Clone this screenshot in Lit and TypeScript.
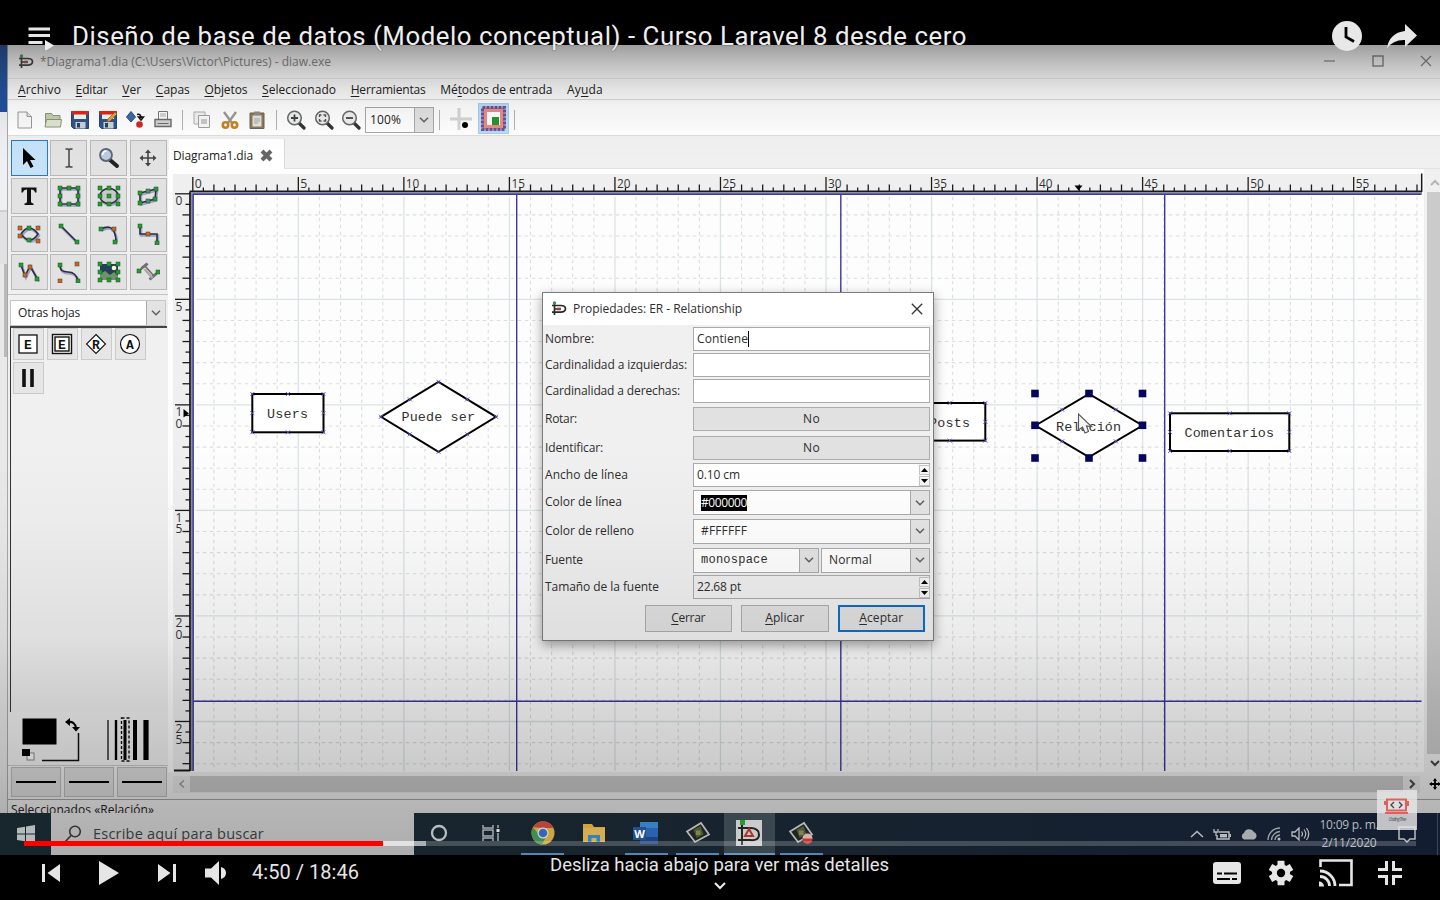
import { LitElement, html, svg, css, nothing } from "lit";
import { customElement } from "lit/decorators.js";

const UI = '"Open Sans"';
const pen = document.createElement("canvas").getContext("2d")!;

/* Letter spacing that makes a run of text take up the given width. */
function spacing(text: string, width: number, font: string): string {
  pen.font = font;
  return ((width - pen.measureText(text).width) / text.length).toFixed(3) + "px";
}

/* A label of a set width, with an optional underlined access key. */
function label(text: string, width: number, key = -1, size = 12, family = UI, cls = "") {
  const ls = spacing(text, width, `${size}px ${family}`);
  const body = key < 0 ? text : html`${text.slice(0, key)}<u>${text[key]}</u>${text.slice(key + 1)}`;
  return html`<span class="label ${cls}" style="letter-spacing:${ls};font-size:${size}px">${body}</span>`;
}

const icon = (w: number, h: number, content: unknown, cls = "") =>
  html`<svg class="icon ${cls}" width=${w} height=${h} viewBox="0 0 ${w} ${h}">${content}</svg>`;

const diaLogo = icon(16, 15, svg`
  <path d="M3.500 1v13M1 4.500h8.500q5 0 5 3.300t-5 3.300H1M3 8h7" fill="none" stroke="#2a2a2a" stroke-width="1.700"/>
  <path d="M6 6.500h4v3H6z" fill="#a43c32" opacity=".6"/><circle cx="3.500" cy="2" r="1.700" fill="#38915a"/>`);

const chevron = icon(10, 6, svg`<path d="M1 .8l4 4 4-4" fill="none" stroke="#606060" stroke-width="1.500"/>`);

/* ---------- toolbar ---------- */
const floppy = svg`
  <path d="M1.500 1.500h17v17h-15l-2-2z" fill="#2f5587" stroke="#27466e"/>
  <path d="M4 2h12v7H4z" fill="#f4f4f4"/><path d="M1.500 1h17v3.500h-17z" fill="#d92a1c"/>
  <path d="M5.500 12h10v6.500h-10z" fill="#c9d2dc"/><path d="M7 13h3v4.500H7z" fill="#2b4263"/>`;
const lens = (inner: unknown) => svg`
  <path d="M13 13l5 5" stroke="#333" stroke-width="3.200" stroke-linecap="round"/>
  <circle cx="8.500" cy="8" r="6.800" fill="#eef1f0" stroke="#686868" stroke-width="1.500"/>${inner}`;
const tools: Record<string, unknown> = {
  nuevo: svg`<path d="M3 2h9l4.500 4.500V18H3z" fill="#fbfbfb" stroke="#9a9a9a"/><path d="M12 2v4.500h4.500" fill="#e3e3e3" stroke="#9a9a9a"/>`,
  abrir: svg`<path d="M2.500 16V3.500h6l1.500 2h7V10" fill="#c4cfae" stroke="#8a957a"/><path d="M2 17l1.500-7.500h15L17.500 17z" fill="#dfe6cf" stroke="#8a957a"/>`,
  guardar: floppy,
  como: svg`${floppy}<path d="M9 12l1-3 7-7 2 2-7 7z" fill="#e9a13a" stroke="#9c5b16" stroke-width=".7"/>`,
  exportar: svg`<path d="M6 1.500l4.500 5.500L6 12 1.500 7z" fill="#3f6cab" stroke="#284a7c"/>
    <path d="M12 4.500q4-1 4 3.500M13.500 7l2.500 3 2.500-3z" fill="none" stroke="#111" stroke-width="1.500"/><circle cx="14.500" cy="14.500" r="3.300" fill="#d6281f"/>`,
  imprimir: svg`<path d="M5.500 9V1.500h9V9" fill="#fff" stroke="#777"/><path d="M7 4h6M7 6h6" stroke="#aaa"/>
    <path d="M2 9.500h16v7H2z" fill="#d4d4d4" stroke="#6c6c6c" stroke-width="1.400"/><path d="M4.500 13.500h11" stroke="#6c6c6c"/>`,
  copiar: svg`<path d="M2 2h11v12H2z" fill="#f3f3f3" stroke="#b0b0b0"/><path d="M6.500 5.500h11v12h-11z" fill="#fafafa" stroke="#a0a0a0"/><path d="M9 9h6v5H9z" fill="#c9c9c9"/>`,
  cortar: svg`<path d="M4 2l8 11M16 2L8 13" stroke="#9a9a9a" stroke-width="2.400"/><circle cx="5.500" cy="15" r="2.700" fill="none" stroke="#ca8420" stroke-width="2.600"/><circle cx="14.500" cy="15" r="2.700" fill="none" stroke="#ca8420" stroke-width="2.600"/>`,
  pegar: svg`<path d="M3 3h14v15.500H3z" fill="#8f7b5c" stroke="#6d6252"/><path d="M5.500 5.500h9v11h-9z" fill="#e4e4e0"/><path d="M7 1.500h6v3.500H7z" fill="#8c8c88"/><path d="M7 9h6M7 11h6M7 13h4" stroke="#a5a5a5"/>`,
  acercar: lens(svg`<path d="M5 8h7M8.500 4.500v7" stroke="#444" stroke-width="1.800"/>`),
  ajustar: lens(svg`<path d="M5.500 7V5h2M9.500 5h2v2M11.500 9v2h-2M7.500 11h-2V9" fill="none" stroke="#555" stroke-width="1.400"/>`),
  alejar: lens(svg`<path d="M5 8h7" stroke="#444" stroke-width="1.800"/>`),
};
const tool = (n: string) => html`<span class="tool">${icon(20, 20, tools[n])}</span>`;

/* ---------- toolbox ---------- */
const G = (pts: number[][], fill = "#1fa02c") =>
  pts.map(([x, y]) => svg`<rect x=${x - 2} y=${y - 2} width="4" height="4" fill=${fill} stroke="#274a2c" stroke-width=".5"/>`);
const O = (pts: number[][]) => G(pts, "#d9601e");
const eight = [[3, 3], [12, 3], [21, 3], [3, 11], [21, 11], [3, 19], [12, 19], [21, 19]];
const line = (d: string, fill = "none") => svg`
  <path d=${d} fill="none" stroke="#6f78bd" stroke-width="2.500" opacity=".6" transform="translate(1 1.500)"/>
  <path d=${d} fill=${fill} stroke="#2d2f3c" stroke-width="1.600"/>`;
const box: unknown[] = [
  svg`<path d="M6 1v17l4-4 3.500 7 3-1.500-3.500-6.500h5.500z" fill="#000"/>`,
  svg`<path d="M8.500 2h2.500l1 1 1-1h2.500M8.500 20h2.500l1-1 1 1h2.500M12 3v16" fill="none" stroke="#444" stroke-width="1.500"/>`,
  svg`<path d="M13 13l7 6" stroke="#222" stroke-width="4" stroke-linecap="round"/><circle cx="9" cy="8" r="6" fill="#b9c9df" stroke="#5b6674" stroke-width="1.800"/><path d="M5.500 8q.5-4 4-4" stroke="#fff" fill="none" stroke-width="1.500"/>`,
  svg`<path d="M12 4v14M5 11h14" stroke="#444" stroke-width="1.600"/><path d="M12 2.500l3 3.500H9zM12 19.500l3-3.500H9zM3.500 11L7 8v6zM20.500 11L17 8v6z" fill="#444"/>`,
  svg`<path d="M4.500 2.500h15v5h-1.500q-.5-3-4-3v12q0 2 2.500 2v1.500h-9V18.500q2.500 0 2.500-2v-12q-3.500 0-4 3H4.500z" fill="#111"/>`,
  svg`${line("M3 3h18v16H3z")}${G(eight)}`,
  svg`${line("M3 11a9 7.500 0 1 0 18 0a9 7.500 0 1 0-18 0", "#c3cdc6")}${G(eight)}${G([[12, 11]])}`,
  svg`${line("M4 8L20 4 19 14 4 18z")}${G([[4, 8], [20, 4], [19, 14], [4, 18]])}${G([[12, 6], [12, 16]], "#5a8a63")}`,
  svg`${line("M4 11q8-12 17 0q-8 12-17 0")}${O([[3, 5], [3, 13], [21, 5], [21, 18]])}${G([[12, 5], [12, 17]])}`,
  svg`${line("M4 3l16 16")}${G([[4, 3], [20, 19]])}`,
  svg`${line("M4 6q14-7 15 12")}${G([[4, 6], [18, 19]])}${O([[17, 6]])}`,
  svg`${line("M4 3v8h17v9")}${G([[4, 3], [21, 20]])}${O([[12, 11]])}`,
  svg`${line("M4 4l4 11 5-10 8 14")}${G([[4, 4], [20, 18]])}${O([[8, 14], [13, 6]])}`,
  svg`${line("M3 5q0 6 8 6t10 9")}${G([[3, 4], [21, 20]])}${O([[20, 3], [3, 20]])}`,
  svg`<path d="M3 3h18v16H3z" fill="#233f5c"/><path d="M3 13l5-3 5 4 4-3 4 4v4H3z" fill="#6f9468"/><circle cx="17" cy="7" r="2.300" fill="#fff7c2"/>${G(eight)}`,
  svg`<path d="M5 7l6-5M9 5l9 10M13 18l7-6M4 9l8-6M14 19l7-6" fill="none" stroke="#6e6e6e" stroke-width="1.600"/><path d="M8.500 8l8 9" stroke="#aaa" stroke-width="2.500"/>${G([[3, 10], [22, 11]])}`,
];
const shapes: unknown[] = [
  svg`<rect x="3" y="3" width="18" height="18" fill="#fff" stroke="#111" stroke-width="1.300"/><text class="glyph" x="12" y="17">E</text>`,
  svg`<rect x="2.500" y="2.500" width="19" height="19" fill="#fff" stroke="#111" stroke-width="1.400"/><rect x="5" y="5" width="14" height="14" fill="#fff" stroke="#111" stroke-width="1.400"/><text class="glyph" x="12" y="16.500">E</text>`,
  svg`<path d="M12 2.500l9.500 9.500-9.500 9.500L2.500 12z" fill="#fff" stroke="#111" stroke-width="1.100"/><text class="glyph" x="12" y="16.500">R</text>`,
  svg`<circle cx="12" cy="12" r="9.500" fill="#fff" stroke="#111" stroke-width="1.200"/><text class="glyph" x="12" y="16.500">A</text>`,
  svg`<path d="M8 3v18M16 3v18" stroke="#111" stroke-width="3.600"/>`,
];

/* ---------- canvas ---------- */
const X0 = 192.8, Y0 = 193.8, U = 21.107;
const R = 1421.5, B = 771;

function grid() {
  const out: unknown[] = [];
  for (let i = 1; X0 + i * U < R; i++) {
    const x = X0 + i * U;
    out.push(svg`<line x1=${x} x2=${x} y1=${Y0 + 3} y2=${B} class=${i % 5 ? "minor" : "major"}/>`);
  }
  for (let i = 1; Y0 + i * U < B; i++) {
    const y = Y0 + i * U;
    out.push(svg`<line x1=${X0 + 3} x2=${R} y1=${y} y2=${y} class=${i % 5 ? "minor" : "major"}/>`);
  }
  return out;
}

function rulers() {
  const out: unknown[] = [];
  for (let i = 0; X0 + (i * U) / 2 < R - 4; i++) {
    const x = X0 + (i * U) / 2;
    const top = i % 10 === 0 ? 177 : i % 2 === 0 ? 184.5 : 187.5;
    out.push(svg`<line x1=${x} x2=${x} y1=${top} y2="191.500" class="tick"/>`);
    if (i % 10 === 0) out.push(svg`<text class="num" x=${x + 2} y="188" textLength=${i > 10 ? 13.5 : 7} lengthAdjust="spacingAndGlyphs">${i / 2}</text>`);
  }
  for (let i = 0; Y0 + (i * U) / 2 < B; i++) {
    const y = Y0 + (i * U) / 2;
    const left = i % 10 === 0 ? 175 : i % 2 === 0 ? 182.5 : 185.5;
    out.push(svg`<line y1=${y} y2=${y} x1=${left} x2="190" class="tick"/>`);
    if (i % 10 === 0) String(i / 2).split("").forEach((c, k) =>
      out.push(svg`<text class="num" x="175.500" y=${y + 11.500 + k * 11.500}>${c}</text>`));
  }
  return out;
}

const marks = (pts: number[][]) =>
  pts.map(([x, y]) => svg`<path class="mark" d="M${x - 2} ${y - 2}l4 4m0-4l-4 4"/>`);

function entity(x: number, y: number, w: number, h: number, name: string, tx: number, tw: number, ty: number) {
  return svg`<rect class="shape" x=${x} y=${y} width=${w} height=${h}/>
    ${marks([[x, y], [x + w / 2, y], [x + w, y], [x, y + h / 2], [x + w, y + h / 2], [x, y + h], [x + w / 2, y + h], [x + w, y + h]])}
    <text class="mono" x=${tx} y=${ty} textLength=${tw}>${name}</text>`;
}
function relation(cx: number, cy: number, rx: number, ry: number, name: string, tx: number, tw: number, ty: number) {
  return svg`<path class="shape" d="M${cx - rx} ${cy}L${cx} ${cy - ry}L${cx + rx} ${cy}L${cx} ${cy + ry}Z"/>
    ${marks([[cx - rx, cy], [cx + rx, cy], [cx, cy - ry], [cx, cy + ry], [cx - rx / 2, cy - ry / 2], [cx + rx / 2, cy - ry / 2], [cx - rx / 2, cy + ry / 2], [cx + rx / 2, cy + ry / 2]])}
    <text class="mono" x=${tx} y=${ty} textLength=${tw}>${name}</text>`;
}
const handles = [[1035, 393.5], [1089, 393.5], [1142.5, 393.5], [1035, 425.3], [1142.5, 425.3], [1035, 458], [1089, 458], [1142.5, 458]];

@customElement("dia-canvas")
class DiaCanvas extends LitElement {
  static styles = css`
    :host { display: block; width: 1256px; height: 603px; flex: none; }
    svg { display: block; }
    .minor { stroke: #d9dedf; stroke-width: 1.1; stroke-dasharray: 3.5 3.5; }
    .major { stroke: #dbe3e6; stroke-width: 1.3; }
    .page { stroke: #3c389c; stroke-width: 1.4; }
    .tick { stroke: #1c1c1c; stroke-width: 1.3; }
    .num { font: 12px "Open Sans", sans-serif; fill: #333; }
    .shape { fill: #fff; stroke: #000; stroke-width: 2; }
    .mark { stroke: #5a50d0; stroke-width: .9; fill: none; }
    .mono { font: 13.4px "Liberation Mono", monospace; fill: #303030; }
    .handle { fill: #05055e; }
  `;
  render() {
    return html`<svg width="1256" height="603" viewBox="168 169 1256 603">
      <rect x="168" y="169" width="1256" height="603" fill="#fdfdfd"/>
      <rect x="173" y="174" width="1249" height="18" fill="#efefef"/>
      <rect x="173" y="192" width="17" height="579" fill="#efefef"/>
      ${grid()}
      <rect x="191" y="191" width="1231" height="3" fill="#8d8da6"/>
      <path d="M189.500 191.300H1422M1421.700 173.500V192" stroke="#1a1a1a" stroke-width="1.500" fill="none"/>
      <path d="M190 192v579M174 770.500h16" stroke="#1a1a1a" stroke-width="1.800"/>
      <path d="M192 192v579" stroke="#8d8da6" stroke-width="2"/>
      ${[193.2, 516.7, 840.8, 1164.7].map(x => svg`<line class="page" x1=${x} x2=${x} y1="194" y2="771"/>`)}
      ${[194.2, 701.3].map(y => svg`<line class="page" x1="193" x2="1421.500" y1=${y} y2=${y}/>`)}
      ${rulers()}
      <path d="M1074.500 185.500h8l-4 5z" fill="#000"/><path d="M183.500 409l5.500 4.500-5.500 4z" fill="#000"/>
      ${entity(252.3, 394, 71.2, 38.3, "Users", 267, 41, 418)}
      ${relation(438.5, 416.8, 57.5, 35, "Puede ser", 401.5, 73.5, 421)}
      ${entity(914, 403, 71.3, 37.6, "Posts", 929, 41, 427)}
      ${relation(1089, 425.5, 53.5, 31.5, "Relación", 1056, 65, 431)}
      ${handles.map(([x, y]) => svg`<rect class="handle" x=${x - 3.8} y=${y - 3.8} width="7.600" height="7.600"/>`)}
      ${entity(1170, 413.3, 119.3, 37.7, "Comentarios", 1184.5, 89.5, 437)}
      <path d="M1078.500 414v16l4-3 2.500 6 3.500-1.500-2-5.500 5 .5z" fill="#f4f4f4" stroke="#555" stroke-width="1.100"/>
    </svg>`;
  }
}

/* ---------- dialog ---------- */
@customElement("dia-dialog")
class DiaDialog extends LitElement {
  static styles = css`
    :host { display: block; box-sizing: border-box; width: 392px; height: 349px; background: #f0f0f0; border: 1px solid #7c7c7c;
      box-shadow: 0 4px 11px rgba(0,0,0,.38); color: #2e2e2e; font-family: "Open Sans", sans-serif; }
    .label { white-space: pre; line-height: 16px; display: inline-block; }
    u { text-underline-offset: 1.5px; text-decoration-thickness: 1px; }
    .title { height: 32px; background: #fff; display: flex; align-items: center; padding: 0 10px 1px 8px; box-sizing: border-box; }
    .title .icon { margin-right: 6px; }
    .title .close { margin: 0 0 0 auto; }
    .form { display: grid; grid-template-columns: 148px 1fr; padding: 1.5px 3px 0 2px; grid-template-rows: 26.4px 26.6px 28px 28.2px 27.8px 27px 28.5px 28.7px 27.5px 27px; }
    .cell { height: 24px; display: flex; align-items: center; box-sizing: border-box; }
    .field { background: #fff; border: 1px solid #ababab; padding-left: 3px; }
    .btn { background: #e1e1e1; border: 1px solid #adadad; justify-content: center; }
    .grey { background: #f0f0f0; }
    .caret { width: 1px; height: 16px; background: #000; }
    .spin { margin-left: auto; width: 11px; display: grid; gap: 1px; margin-right: -1px; }
    .spin i { height: 10px; background: #f6f6f6; border: 1px solid #c4c4c4; display: flex; align-items: center; justify-content: center; box-sizing: border-box; }
    .combo { padding-left: 7px; height: 25px; }
    .drop { margin-left: auto; width: 19px; height: 23px; background: #e4e4e4; border-left: 1px solid #ababab; display: flex; align-items: center; justify-content: center; padding-right: 1px; box-sizing: border-box; }
    .sel { background: #000; color: #fff; }
    .pair { display: grid; grid-template-columns: 126px 109px; gap: 2px; }
    .mono { font-family: "Liberation Mono", monospace; }
    .foot { display: flex; gap: 9px; justify-content: flex-end; padding: 2.5px 8px 0 0; }
    .foot .cell { width: 87.5px; height: 27px; }
    .main { border: 2px solid #0b6fd0; }
  `;
  render() {
    const drop = html`<span class="drop">${chevron}</span>`;
    const spin = html`<span class="spin"><i>${icon(7, 4, svg`<path d="M0 4l3.500-4L7 4z"/>`)}</i><i>${icon(7, 4, svg`<path d="M0 0l3.500 4L7 0z"/>`)}</i></span>`;
    const row = (t: string, w: number, field: unknown) => html`<div class="cell">${label(t, w)}</div>${field}`;
    return html`
      <div class="title">${diaLogo}${label("Propiedades: ER - Relationship", 169)}
        ${icon(12, 12, svg`<path d="M.8.8l10.400 10.400M11.200.8L.8 11.200" stroke="#333" stroke-width="1.300"/>`, "close")}</div>
      <div class="form">
        ${row("Nombre:", 49, html`<div class="cell field">${label("Contiene", 51)}<i class="caret"></i></div>`)}
        ${row("Cardinalidad a izquierdas:", 142, html`<div class="cell field"></div>`)}
        ${row("Cardinalidad a derechas:", 135, html`<div class="cell field"></div>`)}
        ${row("Rotar:", 32, html`<div class="cell btn">${label("No", 17)}</div>`)}
        ${row("Identificar:", 58, html`<div class="cell btn">${label("No", 17)}</div>`)}
        ${row("Ancho de línea", 83, html`<div class="cell field">${label("0.10 cm", 43)}${spin}</div>`)}
        ${row("Color de línea", 77, html`<div class="cell field combo">${label("#000000", 46, -1, 12, UI, "sel")}${drop}</div>`)}
        ${row("Color de relleno", 89, html`<div class="cell field combo">${label("#FFFFFF", 46)}${drop}</div>`)}
        ${row("Fuente", 38, html`<div class="pair"><div class="cell field combo">${label("monospace", 67, -1, 12, '"Liberation Mono"', "mono")}${drop}</div><div class="cell field combo">${label("Normal", 43)}${drop}</div></div>`)}
        ${row("Tamaño de la fuente", 114, html`<div class="cell field grey">${label("22.68 pt", 44)}${spin}</div>`)}
      </div>
      <div class="foot">
        <div class="cell btn">${label("Cerrar", 34, 0)}</div>
        <div class="cell btn">${label("Aplicar", 39, 0)}</div>
        <div class="cell btn main">${label("Aceptar", 44, 0)}</div>
      </div>`;
  }
}

@customElement("app-root")
class AppRoot extends LitElement {
  static styles = css`
    :host { display: block; position: relative; width: 1440px; height: 900px; overflow: hidden; background: #000; color: #222; font-family: "Open Sans", sans-serif; }
    .label { white-space: pre; line-height: 16px; display: inline-block; }
    u { text-underline-offset: 1.5px; text-decoration-thickness: 1px; }
    .icon { display: block; flex: none; }
    .frame { padding-top: 45px; height: 810px; display: flex; flex-direction: column; }
    .work { height: 768px; display: flex; overflow: hidden; background: #f0f0f0; }
    .desk { width: 8px; flex: none; display: flex; flex-direction: column; border-right: 1px solid #a9a9a9; box-sizing: border-box; }
    .desk-blue { height: 67px; background: linear-gradient(#2f5ca5, #1f4fa0); }
    .desk-a { height: 98px; background: #eeeff2; }
    .desk-b { height: 52px; background: #e2e2e4; border-top: 2px solid #cfcfd2; }
    .desk-c { height: 93px; border-right: 3px solid #b9b9b9; background: #e8e8e8; }
    .desk-d { flex: 1; background: #e9e9e9; }
    .win { width: 1432px; flex: none; display: flex; flex-direction: column; box-sizing: border-box; }
    .title { height: 33px; background: #fff; display: flex; align-items: center; padding: 0 8px 0 10px; color: #8b8b8b; flex: none; box-sizing: border-box; }
    .title .icon { margin-right: 6px; opacity: .85; }
    .winbtns { margin-left: auto; display: flex; gap: 36px; align-items: center; padding-bottom: 2px; }
    .title .winbtns .icon { margin: 0; }
    .menu { height: 22px; background: #fff; border-top: 1px solid #ededed; border-bottom: 1px solid #d9d9d9; display: flex; gap: 14.6px; align-items: center; padding: 1px 0 0 10px; box-sizing: border-box; flex: none; }
    .toolbar { height: 36px; background: #fff; border-bottom: 1px solid #dedede; display: flex; align-items: center; padding: 4px 0 0 3.5px; box-sizing: border-box; flex: none; }
    .tool { width: 27.5px; display: flex; justify-content: center; }
    .sep { width: 1px; height: 20px; background: #b3b3b3; margin: 0 5.4px; }
    .zoom { width: 69px; height: 26px; box-sizing: border-box; border: 1px solid #a9a9a9; background: #fff; display: flex; align-items: center; padding-left: 4px; }
    .drop { margin-left: auto; width: 18px; align-self: stretch; background: #e3e3e3; border-left: 1px solid #ababab; display: flex; align-items: center; justify-content: center; }
    .toggle { width: 31px; height: 31px; background: #bcdcf6; display: flex; align-items: center; justify-content: center; border: 1px solid #a6cff0; box-sizing: border-box; margin-top: -2px; }
    .body { height: 661px; display: flex; flex: none; }
    .left { width: 160px; flex: none; display: flex; flex-direction: column; }
    .box { display: grid; grid-template-columns: repeat(4, 37.2px); grid-auto-rows: 36px; gap: 2px 2.6px; padding: 4px 0 3px 2.5px; border-bottom: 1px solid #c4c4c4; height: 159px; box-sizing: border-box; }
    .cell { background: #e2e2e2; border: 1px solid #b9b9b9; box-sizing: border-box; display: flex; align-items: center; justify-content: center; }
    .on { background: #c5e2f9; border-color: #2a78c4; }
    .sheet { margin: 5px 2px 0 2px; height: 26px; background: #fff; border: 1px solid #c6c6c6; box-sizing: border-box; display: flex; align-items: center; padding-left: 7px; }
    .sheets { margin: 0 1px 0 2px; height: 387px; box-sizing: border-box; border-top: 2px solid #444; border-left: 1px solid #333; display: grid; grid-template-columns: repeat(4, 31.5px); grid-auto-rows: 32px; gap: 2px 2.5px; padding: 0 0 0 1.5px; align-content: start; }
    .sheets .cell { border-color: #cacaca; background: #e6e6e6; }
    .glyph { font: bold 13px "Liberation Mono", monospace; text-anchor: middle; fill: #111; }
    .colors { height: 54px; border-bottom: 1px solid #cbcbcb; background: #f2f2f2; padding-top: 1px; box-sizing: border-box; }
    .lines { display: flex; gap: 2.5px; padding: 1px 1px 0 3px; height: 30px; }
    .lines .cell { flex: 1; background: #dedede; border-color: #bbb; }
    .dash { width: 40px; height: 2px; background: #000; }
    .right { flex: 1; display: flex; flex-direction: column; }
    .tabs { height: 33px; display: flex; border-bottom: 1px solid #e2e2e2; box-sizing: border-box; background: #f0f0f0; }
    .tab { background: #fff; width: 116px; margin: 3px 0 -1px 1px; padding: 3px 0 0 4px; display: flex; align-items: center; gap: 7px; box-sizing: border-box; border-right: 1px solid #dadada; }
    .view { display: flex; height: 603px; }
    .vbar { width: 16px; background: #f0f0f0; display: flex; flex-direction: column; align-items: center; padding-top: 5px; box-sizing: border-box; }
    .vthumb { width: 14px; flex: 1; background: #cbcbcb; margin-left: 3px; }
    .arrow { height: 18px; display: flex; align-items: center; margin-left: 3px; }
    .hbar { height: 25px; display: flex; align-items: center; padding: 0 0 1px 5px; box-sizing: border-box; }
    .htrack { display: flex; align-items: center; width: 1247px; height: 17px; background: #e6e6e6; justify-content: space-between; margin-right: 9px; }
    .hthumb { width: 1213px; height: 16px; background: #c8c8c8; }
    .harrow { width: 17px; display: flex; justify-content: center; }
    .status { border-top: 1px solid #a2a2a2; padding: 2px 0 0 3px; height: 17px; background: #f0f0f0; flex: none; margin-top: 2px; display: flex; align-items: flex-start; box-sizing: border-box; }
    .bar { height: 42px; display: flex; background: linear-gradient(90deg, #18262d, #17242f 55%, #131d31); color: #b9bcbf; flex: none; position: relative; }
    .start { width: 51px; display: flex; align-items: center; justify-content: center; }
    .search { width: 362.5px; background: linear-gradient(#b5b5b5, #adadad); color: #35383b; display: flex; align-items: center; padding-left: 13px; gap: 11px; box-sizing: border-box; }
    .apps { display: flex; }
    .app { width: 51.7px; display: flex; align-items: center; justify-content: center; box-sizing: border-box; border-bottom: 2px solid transparent; }
    .run { width: 43px; margin: 0 4.35px; border-color: #5285b9; }
    .cur { background: #3b474f; width: 51.7px; margin: 0; border-color: #6497c8; }
    .tray { margin-left: auto; display: flex; align-items: center; gap: 9px; }
    .clock { display: flex; flex-direction: column; align-items: center; width: 60px; gap: 2px; color: #b9bcc0; }
    .edge { width: 1px; align-self: stretch; background: #3c4656; margin: 0 2px 0 12px; }
    .shade { position: absolute; left: 0; top: 45px; width: 1440px; height: 768px; pointer-events: none;
      background: linear-gradient(rgba(0,0,0,.38) 0, rgba(0,0,0,.27) 15px, rgba(0,0,0,.18) 30px, rgba(0,0,0,.1) 46px, rgba(0,0,0,.055) 60px, rgba(0,0,0,.01) 91px, transparent 115px, transparent 400px, rgba(0,0,0,.02) 480px, rgba(0,0,0,.07) 590px, rgba(0,0,0,.14) 655px, rgba(0,0,0,.2) 725px, rgba(0,0,0,.25) 768px); }
    dia-dialog { position: absolute; left: 542px; top: 292px; }
    .head { position: absolute; left: 0; top: 0; width: 1440px; height: 72px; display: flex; align-items: center; padding: 0 22px 0 27px; box-sizing: border-box; color: #eee; }
    .head .label, .controls .label { font-family: Roboto, sans-serif; line-height: 30px; text-shadow: 0 0 2px rgba(0,0,0,.6); }
    .head .label { margin-left: 17px; }
    .head .acts { margin-left: auto; display: flex; gap: 23px; align-items: center; }
    .mark { position: absolute; left: 1377px; top: 790px; width: 40px; height: 40px; background: rgba(230,230,232,.82); display: flex; flex-direction: column; align-items: center; padding-top: 8px; box-sizing: border-box; font-style: italic; color: #555; }
    .mark .label { line-height: 8px; }
    .progress { position: absolute; left: 24px; top: 841px; width: 1392px; height: 5px; background: rgba(255,255,255,.2); display: flex; }
    .played { background: #f00; }
    .loaded { background: rgba(255,255,255,.55); }
    .controls { position: absolute; left: 0; top: 855px; width: 1440px; height: 45px; display: flex; align-items: center; color: #e6e6e6; padding: 0 37px 9px 41px; box-sizing: border-box; background: #000; }
    .lft { display: flex; align-items: center; width: 509px; }
    .lft .label { margin-left: 24px; padding-bottom: 2px; }
    .gap { margin-left: 38px; }
    .gap2 { margin-left: 27px; }
    .hint { display: flex; flex-direction: column; align-items: center; align-self: flex-start; gap: 7px; }
    .hint .label { line-height: 20px; }
    .rgt { margin-left: auto; display: flex; gap: 24px; align-items: center; }
    .cc { margin-right: 2px; }
  `;

  private strip() {
    return html`<div class="desk"><div class="desk-blue"></div><div class="desk-a"></div><div class="desk-b"></div><div class="desk-c"></div><div class="desk-d"></div></div>`;
  }

  private leftPanel() {
    return html`<div class="left">
      <div class="box">${box.map((b, i) => html`<span class="cell ${i ? "" : "on"}">${icon(24, 22, b)}</span>`)}</div>
      <div class="sheet">${label("Otras hojas", 62)}<span class="drop">${chevron}</span></div>
      <div class="sheets">${shapes.map(s => html`<span class="cell">${icon(24, 24, s)}</span>`)}</div>
      <div class="colors">${icon(158, 52, svg`
        <path d="M70.500 20v27.500H34" fill="none" stroke="#111" stroke-width="1.500"/>
        <rect x="14.500" y="5.500" width="34" height="26" fill="#000"/>
        <path d="M60 9q7-1 8 6" fill="none" stroke="#000" stroke-width="2"/><path d="M57 9l5-4v8zM64 14h8l-4 4.500z" fill="#000"/>
        <rect x="19" y="40" width="7" height="7" fill="#fff" stroke="#888"/><rect x="14" y="36" width="8" height="7" fill="#000"/>
        <path d="M100 7v40" stroke="#111" stroke-width="1.300"/><path d="M108 7v40" stroke="#000" stroke-width="2.400"/>
        <path d="M117 7v40" stroke="#000" stroke-width="3"/><path d="M113.500 5h7.500v43h-7.500z" fill="none" stroke="#111" stroke-width="1.400" stroke-dasharray="3 2"/>
        <path d="M127 7v40" stroke="#000" stroke-width="4"/><path d="M138 7v40" stroke="#000" stroke-width="5.200"/>`)}</div>
      <div class="lines">${[0, 1, 2].map(() => html`<span class="cell"><i class="dash"></i></span>`)}</div>
    </div>`;
  }

  private taskbar() {
    const camtasia = (rec: boolean) => icon(26, 24, svg`
      <path d="M2 10.500L16 2l8 11.500L10 21z" fill="#1f2622" stroke="#b8b8b8" stroke-width="1.700"/><path d="M8.500 8.500l7-3.500 3 8.500-7 3.500z" fill="#4d5735"/><path d="M11 9.500h4.500v4.500H11z" fill="#7b8552"/>
      ${rec ? svg`<circle cx="19.500" cy="18" r="5" fill="#c43a33"/><path d="M14.500 17.500a5 5 0 0 1 10 0z" fill="#d8b0ac"/>` : nothing}`);
    const apps: [string, unknown][] = [
      ["", icon(18, 18, svg`<circle cx="9" cy="9" r="7" fill="none" stroke="#b8bcc0" stroke-width="2.300"/>`)],
      ["", icon(20, 18, svg`<path d="M2 1v3h10V1M2 17v-3h10v3M2 6h10v6H2zM17 1v3M17 9v8" fill="none" stroke="#a5abb0" stroke-width="1.500"/><rect x="15.500" y="5" width="3" height="3" fill="#ddd"/>`)],
      ["run", icon(24, 24, svg`<circle cx="12" cy="12" r="11.500" fill="#c9a63f"/><path d="M2 6.300A11.500 11.500 0 0 1 22.500 7H12z" fill="#b8453b"/><path d="M2 6.300A11.500 11.500 0 0 0 11 23.400L16 14l-8-.5z" fill="#3f8f52"/><circle cx="12" cy="12" r="5.500" fill="#d8d8d8"/><circle cx="12" cy="12" r="4.300" fill="#3866b8"/>`)],
      ["", icon(24, 20, svg`<path d="M1 1h9l2 3h11v15H1z" fill="#cfa243"/><path d="M1 5h22v14H1z" fill="#d5ae54"/><path d="M6 19v-7h12v7h-3.500v-4h-5v4z" fill="#3482b9"/>`)],
      ["run", icon(26, 22, svg`<path d="M7 0h18v22H7z" fill="#2b62ae"/><path d="M7 0h18v6H7z" fill="#387ec2"/><path d="M7 15h18v7H7z" fill="#1c4280"/><rect x="0" y="5" width="13" height="13" fill="#204f94"/><text x="6.500" y="15.500" text-anchor="middle" font-family="Open Sans" font-weight="700" font-size="11" fill="#fff">W</text>`)],
      ["run", camtasia(false)],
      ["run cur", icon(26, 26, svg`<rect width="26" height="26" fill="#c9cbcc"/><path d="M6 2v23M2 8h12q9 0 9 6.500T14 20H2" fill="none" stroke="#222" stroke-width="2"/><path d="M9 16l4-7 4 7z" fill="none" stroke="#b1322a" stroke-width="2"/><rect x="4" y="0" width="5" height="5" fill="#1fa02c"/>`)],
      ["run", camtasia(true)],
    ];
    return html`<div class="bar">
      <div class="start">${icon(18, 18, svg`<path d="M0 3l8-1.300V8.500H0zM9 1.500L18 0v8.500H9zM0 9.500h8v6.800L0 15zM9 9.500h9V18l-9-1.500z" fill="#b5babd"/>`)}</div>
      <div class="search">${icon(18, 18, svg`<circle cx="11" cy="6.500" r="5.300" fill="none" stroke="#333" stroke-width="1.600"/><path d="M7 10.500L1 17" stroke="#333" stroke-width="1.700"/>`)}${label("Escribe aquí para buscar", 171, -1, 14.5)}</div>
      <div class="apps">${apps.map(([c, i]) => html`<span class="app ${c}">${i}</span>`)}</div>
      <div class="tray">
        ${icon(14, 8, svg`<path d="M1 7l6-5.500L13 7" fill="none" stroke="#b9bcc0" stroke-width="1.500"/>`)}
        ${icon(18, 12, svg`<path d="M6 4h10v7H4V7" fill="none" stroke="#b9bcc0" stroke-width="1.500"/><path d="M7 6h7v3.500H7zM16.500 6h1.500v3h-1.500z" fill="#b9bcc0"/><path d="M1 1v3h4V1M3 4v4" stroke="#b9bcc0" fill="none" stroke-width="1.300"/>`)}
        ${icon(18, 12, svg`<path d="M4 11.500a3.500 3.500 0 0 1 0-6.500 5.500 5.500 0 0 1 10-1 4 4 0 0 1 0 7.500z" fill="#a7abb0"/>`)}
        ${icon(15, 14, svg`<g fill="none" stroke="#9da2a8" stroke-width="1.400"><path d="M1 13A12 12 0 0 1 13 1M4.500 13A9 9 0 0 1 13 4.500M8 13a5.500 5.500 0 0 1 5-5"/></g><circle cx="12" cy="12" r="1.500" fill="#b9bcc0"/>`)}
        ${icon(19, 14, svg`<path d="M1 5h3l4-4v12L4 9H1z" fill="none" stroke="#b9bcc0" stroke-width="1.300"/><path d="M10.500 4.500q2 2.500 0 5M13 2.500q3.500 4.500 0 9M15.500 1q4.500 6 0 12" fill="none" stroke="#b9bcc0" stroke-width="1.200"/>`)}
        <div class="clock">${label("10:09 p. m.", 59)}${label("2/11/2020", 55)}</div>
        ${icon(28, 20, svg`<path d="M11 3h16v12h-5l-3 3-3-3h-5z" fill="none" stroke="#b9bcc0" stroke-width="1.500"/>`)}
        <i class="edge"></i>
      </div>
    </div>`;
  }

  render() {
    const menus: [string, number, number][] = [["Archivo", 43, 0], ["Editar", 32, 0], ["Ver", 19, 0], ["Capas", 34, 0], ["Objetos", 43, 0], ["Seleccionado", 74, 0], ["Herramientas", 75, 0], ["Métodos de entrada", 112, 2], ["Ayuda", 36, 2]];
    return html`
      <div class="frame">
        <div class="work">
          ${this.strip()}
          <div class="win">
            <div class="title">${diaLogo}${label("*Diagrama1.dia (C:\\Users\\Victor\\Pictures) - diaw.exe", 291)}
              <span class="winbtns">
                ${icon(12, 12, svg`<path d="M0 6h11" stroke="#777" stroke-width="1.200"/>`)}
                ${icon(12, 12, svg`<rect x="1" y="1" width="10" height="10" fill="none" stroke="#777" stroke-width="1.400"/>`)}
                ${icon(12, 12, svg`<path d="M1 1l10 10M11 1L1 11" stroke="#777" stroke-width="1.200"/>`)}
              </span></div>
            <div class="menu">${menus.map(([t, w, k]) => label(t, w, k))}</div>
            <div class="toolbar">
              ${["nuevo", "abrir", "guardar", "como", "exportar", "imprimir"].map(tool)}<i class="sep"></i>
              ${["copiar", "cortar", "pegar"].map(tool)}<i class="sep"></i>
              ${["acercar", "ajustar", "alejar"].map(tool)}
              <span class="zoom">${label("100%", 31)}<span class="drop">${chevron}</span></span><i class="sep"></i>
              ${icon(32, 26, svg`<path d="M13 1v22M4 12h22" stroke="#d6d6d6" stroke-width="3"/><circle cx="19" cy="18" r="3" fill="#000"/>`)}
              <span class="toggle">${icon(25, 25, svg`<rect x="1.500" y="1.500" width="22" height="22" fill="#e98d86" stroke="#6a5298" stroke-width="3" stroke-dasharray="3 1"/><rect x="6" y="6" width="13" height="13" fill="#fff"/><rect x="11" y="11" width="7" height="8" fill="#27952f"/>`)}</span>
              <i class="sep"></i>
            </div>
            <div class="body">
              ${this.leftPanel()}
              <div class="right">
                <div class="tabs"><div class="tab">${label("Diagrama1.dia", 80)}${icon(13, 13, svg`<path d="M2 2l9 9M11 2l-9 9" stroke="#666" stroke-width="4"/>`)}</div></div>
                <div class="view"><dia-canvas></dia-canvas>
                  <div class="vbar">
                    <span class="arrow">${icon(12, 8, svg`<path d="M3 6l4-4 4 4" fill="none" stroke="#b5b5b5" stroke-width="2"/>`)}</span>
                    <i class="vthumb"></i>
                    <span class="arrow">${icon(12, 8, svg`<path d="M3 2l4 4 4-4" fill="none" stroke="#444" stroke-width="2"/>`)}</span>
                  </div></div>
                <div class="hbar"><div class="htrack">
                  <span class="harrow">${icon(8, 10, svg`<path d="M6 1.500L2 5l4 3.500" fill="none" stroke="#999" stroke-width="1.500"/>`)}</span>
                  <i class="hthumb"></i>
                  <span class="harrow">${icon(8, 10, svg`<path d="M2 1l4 4-4 4" fill="none" stroke="#444" stroke-width="2"/>`)}</span></div>
                  ${icon(12, 12, svg`<path d="M6 1v10M1 6h10" stroke="#000" stroke-width="1.800"/><path d="M6 0l2 3H4zM6 12l2-3H4zM0 6l3-2v4zM12 6L9 4v4z"/>`)}
                </div>
              </div>
            </div>
            <div class="status">${label("Seleccionados «Relación»", 143)}</div>
          </div>
        </div>
        ${this.taskbar()}
      </div>
      <dia-dialog></dia-dialog>
      <div class="shade"></div>
      <div class="mark">${icon(26, 17, svg`<path d="M3 1.500h19v11H3zM1 15h23" fill="none" stroke="#e0605c" stroke-width="2"/><path d="M0 3h3v4H0zM22 3h3v5h-3z" fill="#e0605c"/><path d="M10 4L7 7l3 3M15 4l3 3-3 3" fill="none" stroke="#444" stroke-width="1.300"/>`)}${label("Coding Tree", 19, -1, 5)}</div>
      <div class="progress"><i class="played" style="width:358.500px"></i><i class="loaded" style="width:43.500px"></i></div>
      <div class="head">
        ${icon(28, 28, svg`<path d="M1.500 7h21.500M1.500 13.500h21.500M1.500 20.500h14" stroke="#e6e6e6" stroke-width="3"/><path d="M18 19l9 5.500-9 5.500z" fill="#eee" transform="translate(0 -1)"/>`)}
        ${label("Diseño de base de datos (Modelo conceptual) - Curso Laravel 8 desde cero", 895, -1, 25.8, "Roboto")}
        <span class="acts">
          ${icon(32, 32, svg`<circle cx="16" cy="16" r="15" fill="#e8e8e8"/><path d="M15 7v10l8 4.500" fill="none" stroke="#000" stroke-width="2.800"/>`)}
          ${icon(32, 28, svg`<path d="M19 2l12 11.500L19 25v-7Q7 17.500 1 26.500 3 11 19 9z" fill="#e8e8e8"/>`)}
        </span>
      </div>
      <div class="controls">
        <div class="lft">
          ${icon(20, 20, svg`<path d="M1 1h3v18H1zM19 1v18L6.500 10z" fill="#e6e6e6"/>`)}
          ${icon(20, 24, svg`<path d="M0 0v24l20-12z" fill="#e6e6e6"/>`, "gap")}
          ${icon(20, 20, svg`<path d="M16 1h3v18h-3zM1 1v18l12.500-9z" fill="#e6e6e6"/>`, "gap")}
          ${icon(24, 24, svg`<path d="M1 7.500h6l8-7.500v24l-8-7.500H1z" fill="#e6e6e6"/><path d="M17 6q5 1.500 5 6t-5 6z" fill="#e6e6e6"/>`, "gap2")}
          ${label("4:50 / 18:46", 107, -1, 20, "Roboto")}
        </div>
        <div class="hint">${label("Desliza hacia abajo para ver más detalles", 339, -1, 18.5, "Roboto")}${icon(12, 8, svg`<path d="M1 1l5 5 5-5" fill="none" stroke="#eee" stroke-width="2"/>`)}</div>
        <div class="rgt">
          ${icon(28, 22, svg`<rect width="28" height="22" rx="3" fill="#e6e6e6"/><path d="M4 11.500h5M11 11.500h13M4 17h13M19 17h5" stroke="#000" stroke-width="1.800"/>`, "cc")}
          ${icon(28, 26, svg`<g transform="translate(14 13)" fill="#e6e6e6">${[0, 60, 120].map(a => svg`<rect x="-3.500" y="-12.200" width="7" height="24.400" rx=".6" transform="rotate(${a})"/>`)}<circle r="9"/><circle r="4.200" fill="#000"/></g>`)}
          ${icon(34, 28, svg`<path d="M1.500 8V1.500h31v24.500H20" fill="none" stroke="#e6e6e6" stroke-width="2.600"/><path d="M1 12a15 15 0 0 1 15 15M1 17.500A9.500 9.500 0 0 1 10.500 27" fill="none" stroke="#e6e6e6" stroke-width="2.800"/><path d="M0 22.500A5 5 0 0 1 5 27.500H0z" fill="#e6e6e6"/>`)}
          ${icon(26, 26, svg`<path d="M1 9.500h8.500V1M25 9.500h-8.500V1M1 16.500h8.500V25M25 16.500h-8.500V25" fill="none" stroke="#e6e6e6" stroke-width="3"/>`)}
        </div>
      </div>`;
  }
}
